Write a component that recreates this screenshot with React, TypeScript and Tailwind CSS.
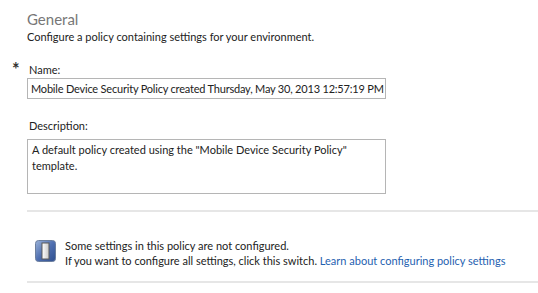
import React from "react";

function SwitchIcon() {
    return (
        <svg width="21" height="22" viewBox="0 0 21 22" className="shrink-0">
            <defs>
                <linearGradient id="sw-bg" x1="0" y1="0" x2="1" y2="1">
                    <stop offset="0" stopColor="#9bb3d9" />
                    <stop offset="0.5" stopColor="#4f6fb0" />
                    <stop offset="1" stopColor="#2f4f8f" />
                </linearGradient>
                <linearGradient id="sw-knob" x1="0" y1="0" x2="1" y2="0">
                    <stop offset="0" stopColor="#ffffff" />
                    <stop offset="1" stopColor="#c8c8c8" />
                </linearGradient>
            </defs>
            <rect x="0.5" y="0.5" width="20" height="21" rx="3" fill="url(#sw-bg)" stroke="#6c7f9e" />
            <rect x="7" y="3" width="7" height="16" fill="url(#sw-knob)" stroke="#5a5a5a" strokeWidth="1" />
        </svg>
    );
}

export default function App() {
    return (
        <div className="w-[538px] h-[293px] bg-white overflow-hidden text-[11px] text-[#222] font-['Lato',sans-serif]">
            <div className="pl-[27px] pt-[9px]">
                <div className="text-[15px] text-[#777] leading-[20px]">General</div>
                <div className="leading-[16px]">Configure a policy containing settings for your environment.</div>
            </div>

            <div className="relative pl-[27px] mt-[9px]">
                <span className="absolute left-[12px] top-[2px] text-[18px] font-bold text-[#333]">*</span>
                <div className="pl-[2px] leading-[16px] pt-[8px]">Name:</div>
                <div className="w-[359px] h-[21px] border border-[#b5b5b5] px-[3px] leading-[19px] whitespace-nowrap overflow-hidden tracking-[-0.2px]">
                    Mobile Device Security Policy created Thursday, May 30, 2013 12:57:19 PM
                </div>
            </div>

            <div className="pl-[27px] mt-[19px]">
                <div className="pl-[2px] leading-[16px]">Description:</div>
                <div className="mt-[5px] w-[359px] h-[55px] border border-[#b5b5b5] px-[4px] pt-[2px] leading-[16px]">
                    A default policy created using the "Mobile Device Security Policy" template.
                </div>
            </div>

            <div className="ml-[27px] mt-[16px] h-[2px] bg-[#e6e6e6]" />

            <div className="flex items-start gap-[9px] pl-[35px] pt-[28px]">
                <SwitchIcon />
                <div className="leading-[15px] mt-[-2px] whitespace-nowrap">
                    <div>Some settings in this policy are not configured.</div>
                    <div>
                        If you want to configure all settings, click this switch.{" "}
                        <a className="text-[#1f5fb0]">Learn about configuring policy settings</a>
                    </div>
                </div>
            </div>

            <div className="ml-[27px] mt-[13px] h-[2px] bg-[#e6e6e6]" />
        </div>
    );
}
